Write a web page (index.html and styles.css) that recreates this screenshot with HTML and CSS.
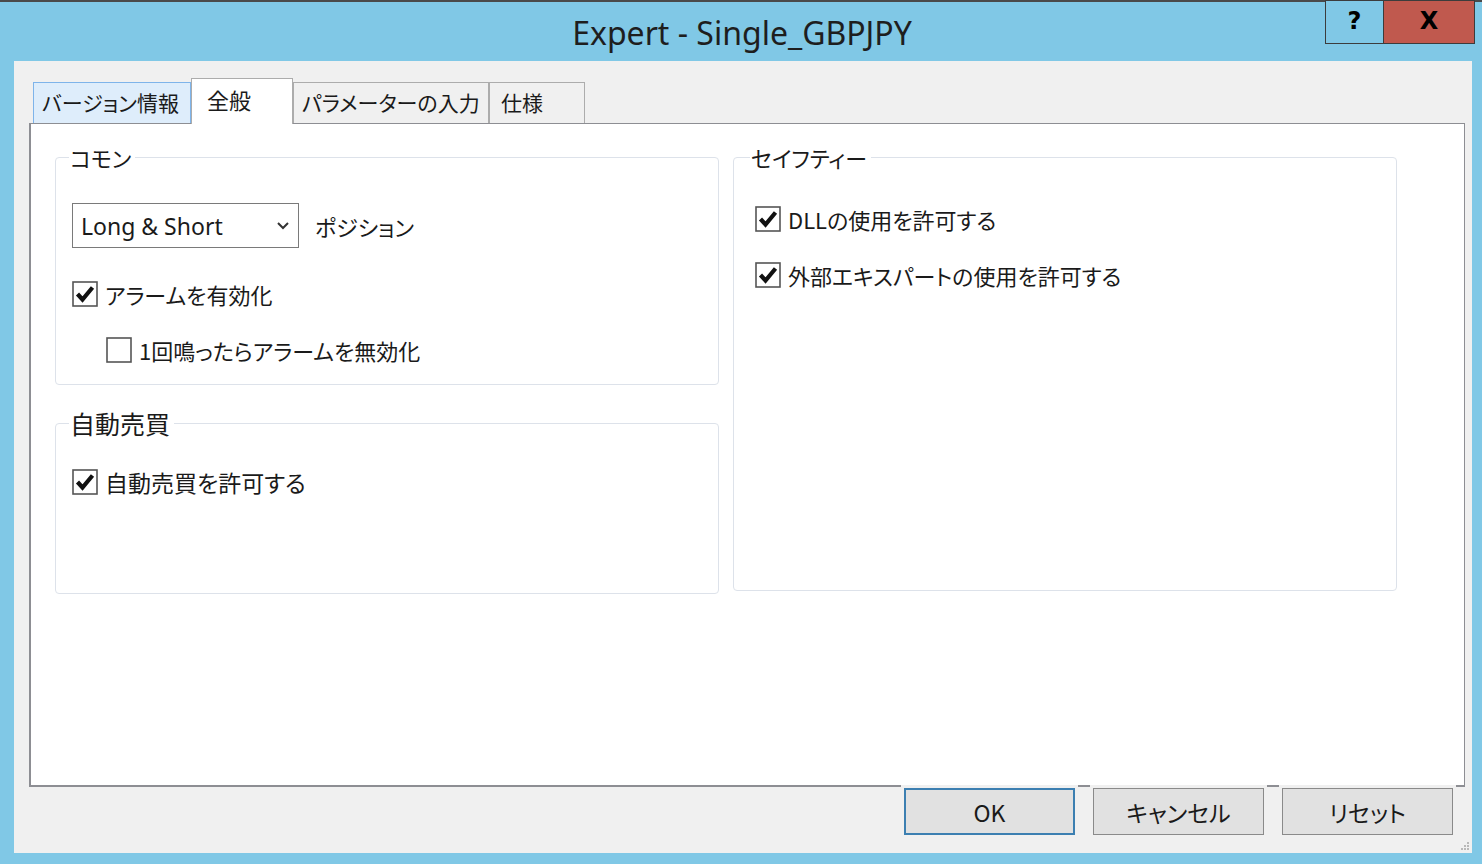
FILE: index.html
```html
<!DOCTYPE html>
<html lang="ja">
<head>
    <meta charset="UTF-8">
    <title>Expert - Single_GBPJPY</title>
    <link rel="stylesheet" href="styles.css">
</head>
<body>

<div class="window">
    <!-- Title bar -->
    <div class="titlebar">
        <div></div>
        <div class="title">Expert - Single_GBPJPY</div>
        <div class="caption-buttons">
            <div class="cap-btn help">?</div>
            <div class="cap-btn close">X</div>
        </div>
    </div>

    <div class="client">
        <!-- Tabs -->
        <div class="tabs">
            <div class="tab hover">バージョン情報</div>
            <div class="tab active">全般</div>
            <div class="tab">パラメーターの入力</div>
            <div class="tab">仕様</div>
        </div>

        <div class="panel">
            <div class="columns">
                <div class="col">
                    <fieldset class="group common">
                        <legend>コモン</legend>
                        <div class="select-row">
                            <div class="select">
                                <span>Long &amp; Short</span>
                                <svg width="14" height="10" viewBox="0 0 14 10"><path d="M2 2 L7 7 L12 2" fill="none" stroke="#333" stroke-width="2"/></svg>
                            </div>
                            <span class="label">ポジション</span>
                        </div>
                        <div class="check">
                            <svg class="box" width="26" height="26" viewBox="0 0 26 26"><rect x="1" y="1" width="24" height="24" fill="#fff" stroke="#555" stroke-width="1.6"/><path d="M5.5 13 L10.5 18.5 L20.5 6.5" fill="none" stroke="#111" stroke-width="4.2"/></svg>
                            <span>アラームを有効化</span>
                        </div>
                        <div class="check sub">
                            <svg class="box" width="26" height="26" viewBox="0 0 26 26"><rect x="1" y="1" width="24" height="24" fill="#fff" stroke="#555" stroke-width="1.6"/></svg>
                            <span>1回鳴ったらアラームを無効化</span>
                        </div>
                    </fieldset>

                    <fieldset class="group auto">
                        <legend class="big">自動売買</legend>
                        <div class="check">
                            <svg class="box" width="26" height="26" viewBox="0 0 26 26"><rect x="1" y="1" width="24" height="24" fill="#fff" stroke="#555" stroke-width="1.6"/><path d="M5.5 13 L10.5 18.5 L20.5 6.5" fill="none" stroke="#111" stroke-width="4.2"/></svg>
                            <span class="big">自動売買を許可する</span>
                        </div>
                    </fieldset>
                </div>

                <fieldset class="group safety">
                    <legend>セイフティー</legend>
                    <div class="check">
                        <svg class="box" width="26" height="26" viewBox="0 0 26 26"><rect x="1" y="1" width="24" height="24" fill="#fff" stroke="#555" stroke-width="1.6"/><path d="M5.5 13 L10.5 18.5 L20.5 6.5" fill="none" stroke="#111" stroke-width="4.2"/></svg>
                        <span>DLLの使用を許可する</span>
                    </div>
                    <div class="check">
                        <svg class="box" width="26" height="26" viewBox="0 0 26 26"><rect x="1" y="1" width="24" height="24" fill="#fff" stroke="#555" stroke-width="1.6"/><path d="M5.5 13 L10.5 18.5 L20.5 6.5" fill="none" stroke="#111" stroke-width="4.2"/></svg>
                        <span>外部エキスパートの使用を許可する</span>
                    </div>
                </fieldset>
            </div>
        </div>

        <!-- Dialog buttons -->
        <div class="buttons">
            <button class="default">OK</button>
            <button>キャンセル</button>
            <button>リセット</button>
            <svg class="grip" width="10" height="10" viewBox="0 0 10 10">
                <rect x="7" y="1" width="2" height="2" fill="#b8b8b8"/>
                <rect x="4" y="4" width="2" height="2" fill="#b8b8b8"/>
                <rect x="7" y="4" width="2" height="2" fill="#b8b8b8"/>
                <rect x="1" y="7" width="2" height="2" fill="#b8b8b8"/>
                <rect x="4" y="7" width="2" height="2" fill="#b8b8b8"/>
                <rect x="7" y="7" width="2" height="2" fill="#b8b8b8"/>
            </svg>
        </div>
    </div>
</div>

</body>
</html>
```

FILE: styles.css
```css
/* Global styles */
body {
    margin: 0;
    padding: 0;
    background-color: #80c8e6;
    font-family: "Noto Sans CJK JP", "Noto Sans", sans-serif;
    font-feature-settings: "palt";
    color: #1a1a1a;
}

.window {
    box-sizing: border-box;
    width: 1482px;
    height: 864px;
    border-top: 2px solid #4a4a4a;
    background-color: #80c8e6;
    display: flex;
    flex-direction: column;
}

/* Title bar */
.titlebar {
    height: 59px;
    display: grid;
    grid-template-columns: 1fr auto 1fr;
}

.title {
    font-family: "Noto Sans", sans-serif;
    font-size: 32px;
    line-height: 62px;
    color: #1e1e1e;
    padding-left: 2px;
}

.caption-buttons {
    display: flex;
    justify-content: flex-end;
    align-items: flex-start;
    margin-top: -2px;
    margin-right: 7px;
}

.cap-btn {
    box-sizing: border-box;
    height: 44px;
    border: 1px solid #3c3c3c;
    font-family: "DejaVu Sans", sans-serif;
    font-weight: bold;
    font-size: 24px;
    line-height: 40px;
    text-align: center;
    color: #000;
}

.cap-btn.help {
    width: 58px;
    border-right: none;
    background-color: #80c8e6;
}

.cap-btn.close {
    width: 92px;
    background-color: #c0594e;
}

/* Client area */
.client {
    flex: 1;
    margin: 0 10px 11px 14px;
    background-color: #f0f0f0;
    padding: 18px 7px 0 15px;
    display: flex;
    flex-direction: column;
}

.tabs {
    height: 44px;
    display: flex;
    align-items: flex-end;
    padding-left: 4px;
    position: relative;
    z-index: 1;
}

.tab {
    box-sizing: border-box;
    height: 41px;
    padding: 0 8px;
    border: 1px solid #acacac;
    border-bottom: none;
    background-color: #f0f0f0;
    font-size: 21px;
    line-height: 38px;
    white-space: nowrap;
    overflow: hidden;
}

.tab.hover {
    width: 158px;
    background-color: #deedfb;
    border-color: #7eb4ea;
}

.tab.active {
    width: 102px;
    height: 46px;
    margin-bottom: -1px;
    background-color: #fff;
    border-color: #acacac;
    line-height: 40px;
    padding-left: 15px;
    font-size: 22px;
}

.tab:nth-child(3) {
    width: 196px;
}

.tab:nth-child(4) {
    width: 96px;
    padding-left: 11px;
}

.panel {
    box-sizing: border-box;
    height: 664px;
    background-color: #fff;
    border: 1px solid #8d8e93;
    border-left-width: 2px;
    border-bottom-width: 2px;
    padding: 20px 0 0 24px;
}

.columns {
    display: grid;
    grid-template-columns: 664px 664px;
    gap: 14px;
    align-items: start;
}

.col {
    display: flex;
    flex-direction: column;
    gap: 23px;
}

/* Group boxes */
.group {
    box-sizing: border-box;
    margin: 0;
    border: 1.5px solid #dde2ea;
    border-radius: 4px;
    font-size: 22px;
    padding: 0 0 0 16px;
}

.group legend {
    padding: 0 4px 0 1px;
    margin-left: -3px;
    font-size: 22px;
    line-height: 26px;
}

.group legend.big {
    font-size: 25px;
    line-height: 30px;
}

.group.common {
    height: 241px;
    padding-top: 33px;
}

.group.auto {
    height: 186px;
    padding-top: 31px;
}

.group.safety {
    height: 447px;
    padding-left: 21px;
    padding-top: 36px;
}

.group.safety legend {
    margin-left: -5px;
}

.select-row {
    display: flex;
    align-items: center;
    gap: 16px;
    margin-bottom: 33px;
}

.select {
    box-sizing: border-box;
    width: 227px;
    height: 45px;
    border: 1.5px solid #7a7a7a;
    display: flex;
    align-items: center;
    justify-content: space-between;
    padding: 0 8px 0 8px;
    font-family: "Noto Sans", sans-serif;
    font-size: 23px;
}

.label {
    font-size: 22px;
}

.check {
    display: flex;
    align-items: center;
    gap: 7px;
    height: 26px;
    margin-bottom: 30px;
}

.check .box {
    flex-shrink: 0;
}

.check.sub {
    margin-left: 34px;
}

.check span.big {
    font-size: 23px;
}

/* Buttons */
.buttons {
    display: flex;
    justify-content: flex-end;
    align-items: flex-start;
    gap: 18px;
    padding-top: 1px;
    padding-right: 12px;
    position: relative;
}

button {
    box-sizing: border-box;
    width: 171px;
    height: 47px;
    background-color: #e1e1e1;
    border: 1.5px solid #8a8a8a;
    font-family: "Noto Sans CJK JP", "Noto Sans", sans-serif;
    font-feature-settings: "palt";
    font-size: 23px;
    color: #1a1a1a;
    outline: 3px solid #f0f0f0;
    margin-top: 0;
}

button.default {
    border: 2px solid #3c7fb1;
}

.grip {
    position: absolute;
    right: -5px;
    bottom: -16px;
}
```
